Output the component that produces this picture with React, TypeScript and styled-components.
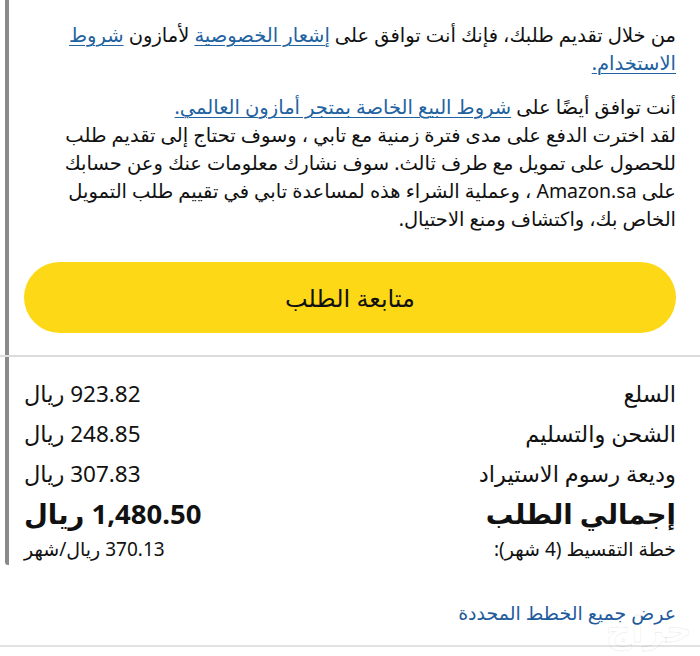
import { type FC } from "react";
import styled, { createGlobalStyle } from "styled-components";

const GlobalStyle = createGlobalStyle`
  html, body {
    margin: 0;
    padding: 0;
    background: #fff;
  }
  body {
    font-family: "Noto Sans", "DejaVu Sans", sans-serif;
    color: #111;
  }
`;

const summaryRows = [
  { label: "السلع", value: "923.82 ريال" },
  { label: "الشحن والتسليم", value: "248.85 ريال" },
  { label: "وديعة رسوم الاستيراد", value: "307.83 ريال" },
];

const App: FC = () => {
  return (
    <Page dir="rtl">
      <GlobalStyle />
      <Framed>
        {/* Terms + continue */}
        <TermsSection>
          <Para>
            من خلال تقديم طلبك، فإنك أنت توافق على <Link href="#">إشعار الخصوصية</Link> لأمازون{" "}
            <Link href="#">شروط الاستخدام.</Link>
          </Para>
          <Para>
            أنت توافق أيضًا على <Link href="#">شروط البيع الخاصة بمتجر أمازون العالمي.</Link>
            <br />
            لقد اخترت الدفع على مدى فترة زمنية مع تابي ، وسوف تحتاج إلى تقديم طلب للحصول على
            تمويل مع طرف ثالث. سوف نشارك معلومات عنك وعن حسابك على Amazon.sa ، وعملية الشراء
            هذه لمساعدة تابي في تقييم طلب التمويل الخاص بك، واكتشاف ومنع الاحتيال.
          </Para>
          <ContinueButton type="button">متابعة الطلب</ContinueButton>
        </TermsSection>

        <Divider />

        {/* Order summary */}
        <Summary>
          {summaryRows.map((row) => (
            <Row key={row.label}>
              <span>{row.label}</span>
              <span>{row.value}</span>
            </Row>
          ))}
          <Row $variant="total">
            <span>إجمالي الطلب</span>
            <span>1,480.50 ريال</span>
          </Row>
          <Row $variant="small">
            <span>خطة التقسيط (4 شهر):</span>
            <span>370.13 ريال/شهر</span>
          </Row>
        </Summary>
      </Framed>

      <PlansLink href="#">عرض جميع الخطط المحددة</PlansLink>
      <BottomRule />
      <Watermark>حراج</Watermark>
    </Page>
  );
};

const Page = styled.div`
  position: relative;
  width: 700px;
  height: 656px;
  overflow: hidden;
  background: #fff;
`;

const Framed = styled.div`
  margin-left: 5px;
  border-left: 4px solid #8a8a8a;
  border-bottom-left-radius: 3px;
`;

const TermsSection = styled.section`
  padding: 21px 24px 22px 15px;
`;

const Para = styled.p`
  margin: 0 0 16px;
  padding-left: 26px;
  font-size: 19.5px;
  line-height: 28px;
  text-align: right;
`;

const Link = styled.a`
  color: #2162a1;
  text-decoration: underline;
  text-underline-offset: 3px;
  text-decoration-thickness: 1px;
`;

const ContinueButton = styled.button`
  display: block;
  width: 100%;
  height: 71px;
  margin-top: 29px;
  border: none;
  border-radius: 36px;
  background: #fdd817;
  color: #111;
  font-family: inherit;
  font-size: 24px;
  cursor: pointer;
`;

const Divider = styled.div`
  height: 2px;
  margin-left: -9px;
  background: #dcdcdc;
`;

const Summary = styled.section`
  display: flex;
  flex-direction: column;
  padding: 16px 24px 0 15px;
`;

const Row = styled.div<{ $variant?: "total" | "small" }>`
  display: flex;
  justify-content: space-between;
  align-items: center;
  height: ${(p) => (p.$variant === "small" ? "32px" : "40px")};
  font-size: ${(p) => (p.$variant === "total" ? "27.5px" : p.$variant === "small" ? "19px" : "22.5px")};
  font-weight: ${(p) => (p.$variant === "total" ? 700 : 400)};
  color: #111;
`;

const PlansLink = styled.a`
  display: block;
  margin: 35px 24px 0 0;
  color: #1f5c9c;
  font-size: 19px;
  text-decoration: none;
  text-align: right;
`;

const BottomRule = styled.div`
  position: absolute;
  left: 0;
  right: 0;
  top: 645px;
  height: 2px;
  background: #e2e2e2;
`;

const Watermark = styled.span`
  position: absolute;
  right: 8px;
  top: 610px;
  font-size: 36px;
  line-height: 38px;
  font-weight: 700;
  color: rgba(0, 0, 0, 0.02);
  -webkit-text-stroke: 1px rgba(0, 0, 0, 0.07);
  pointer-events: none;
`;

export default App;
